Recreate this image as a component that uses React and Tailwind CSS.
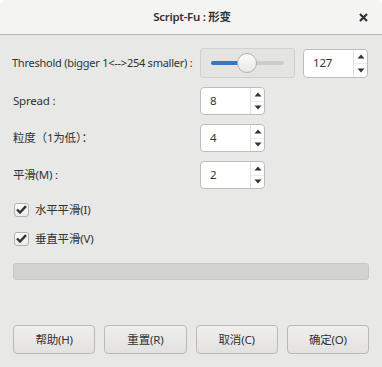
import { useState } from 'react'

const font = { fontFamily: '"Noto Sans", "Noto Sans CJK SC", sans-serif' }

function Arrow({ up }) {
  return (
    <svg width="8" height="5" viewBox="0 0 8 5" className="block">
      {up ? <path d="M0.5 4.5 L4 0.5 L7.5 4.5 Z" fill="#2e3436" /> : <path d="M0.5 0.5 L4 4.5 L7.5 0.5 Z" fill="#2e3436" />}
    </svg>
  )
}

function Spin({ value, className = '' }) {
  return (
    <div className={`flex w-[65px] h-[28px] bg-white border border-[#c0bdb9] rounded-[4px] ${className}`}>
      <div className="flex-1 flex items-center pl-[9px] text-[11.5px] tracking-[-0.2px] text-[#2e3436]">{value}</div>
      <div className="w-[14px] flex flex-col border-l border-[#e3e1de]">
        <div className="flex-1 flex items-center justify-center border-b border-[#ecebe9]"><Arrow up /></div>
        <div className="flex-1 flex items-center justify-center"><Arrow /></div>
      </div>
    </div>
  )
}

function Check({ label }) {
  return (
    <div className="flex items-center gap-[6px] h-[15px]">
      <div className="w-[15px] h-[14px] rounded-[3px] border border-[#b6b3ae] bg-gradient-to-b from-[#fbfbfa] to-[#ecebe9] flex items-center justify-center">
        <svg width="11" height="9" viewBox="0 0 11 9">
          <path d="M1 4.5 L4 7.5 L10 1.2" stroke="#2e3436" strokeWidth="2.4" fill="none" />
        </svg>
      </div>
      <span>{label}</span>
    </div>
  )
}

export default function App() {
  const [value] = useState(127)
  const btn = 'h-[29px] rounded-[4px] border border-[#bdbab6] bg-gradient-to-b from-[#f0efee] to-[#e2e1df] flex items-center justify-center'
  return (
    <div style={font} className="w-[382px] h-[367px] bg-white">
      <div className="w-[382px] h-[367px] rounded-t-[6px] bg-[#e8e8e7] flex flex-col overflow-hidden text-[11.5px] tracking-[-0.2px] text-[#2e3436]">
        <div className="h-[35px] shrink-0 bg-[#f4f4f3] border-b border-[#b9b7b3] flex items-center justify-center relative">
          <span className="font-semibold tracking-[-0.3px] pl-[2px]">Script-Fu : 形变</span>
          <span className="absolute right-[14px] top-[13px]">
            <svg width="9" height="9" viewBox="0 0 9 9">
              <path d="M1 1 L8 8 M8 1 L1 8" stroke="#2e3436" strokeWidth="2.2" />
            </svg>
          </span>
        </div>
        <div className="px-[13px] pt-[13px] flex flex-col">
          <div className="grid grid-cols-[187px_auto] gap-y-[9px] items-center">
            <span className="whitespace-nowrap -ml-[1px] text-[11px] tracking-[-0.25px]">Threshold (bigger 1&lt;--&gt;254 smaller) :</span>
            <div className="flex items-center gap-[8px]">
              <div className="w-[95px] h-[30px] border border-[#d3d1ce] bg-[#e4e4e2] rounded-[3px] flex items-center px-[10px]">
                <div className="relative w-full h-[4px] rounded-full bg-[#cfcdca]">
                  <div className="absolute left-0 top-0 h-[4px] w-[30px] rounded-l-full bg-[#3477c4]" />
                  <div className="absolute left-[26px] top-[-8px] w-[20px] h-[20px] rounded-full border border-[#b6b3ae] bg-gradient-to-b from-[#fbfbfa] to-[#ebeae8]" />
                </div>
              </div>
              <Spin value={value} className="h-[29px]" />
            </div>
            <span>Spread :</span>
            <Spin value="8" />
            <span>粒度（1为低）：</span>
            <Spin value="4" />
            <span>平滑(M) :</span>
            <Spin value="2" />
          </div>
          <div className="flex flex-col gap-[14px] mt-[13px] pl-[1px]">
            <Check label="水平平滑(I)" />
            <Check label="垂直平滑(V)" />
          </div>
          <div className="mt-[17px] h-[17px] rounded-[3px] border border-[#c9c7c4] bg-[#d2d2d0]" />
          <div className="mt-[45px] grid grid-cols-4 gap-[9px]">
            <div className={btn}>帮助(H)</div>
            <div className={btn}>重置(R)</div>
            <div className={btn}>取消(C)</div>
            <div className={btn}>确定(O)</div>
          </div>
        </div>
      </div>
    </div>
  )
}
